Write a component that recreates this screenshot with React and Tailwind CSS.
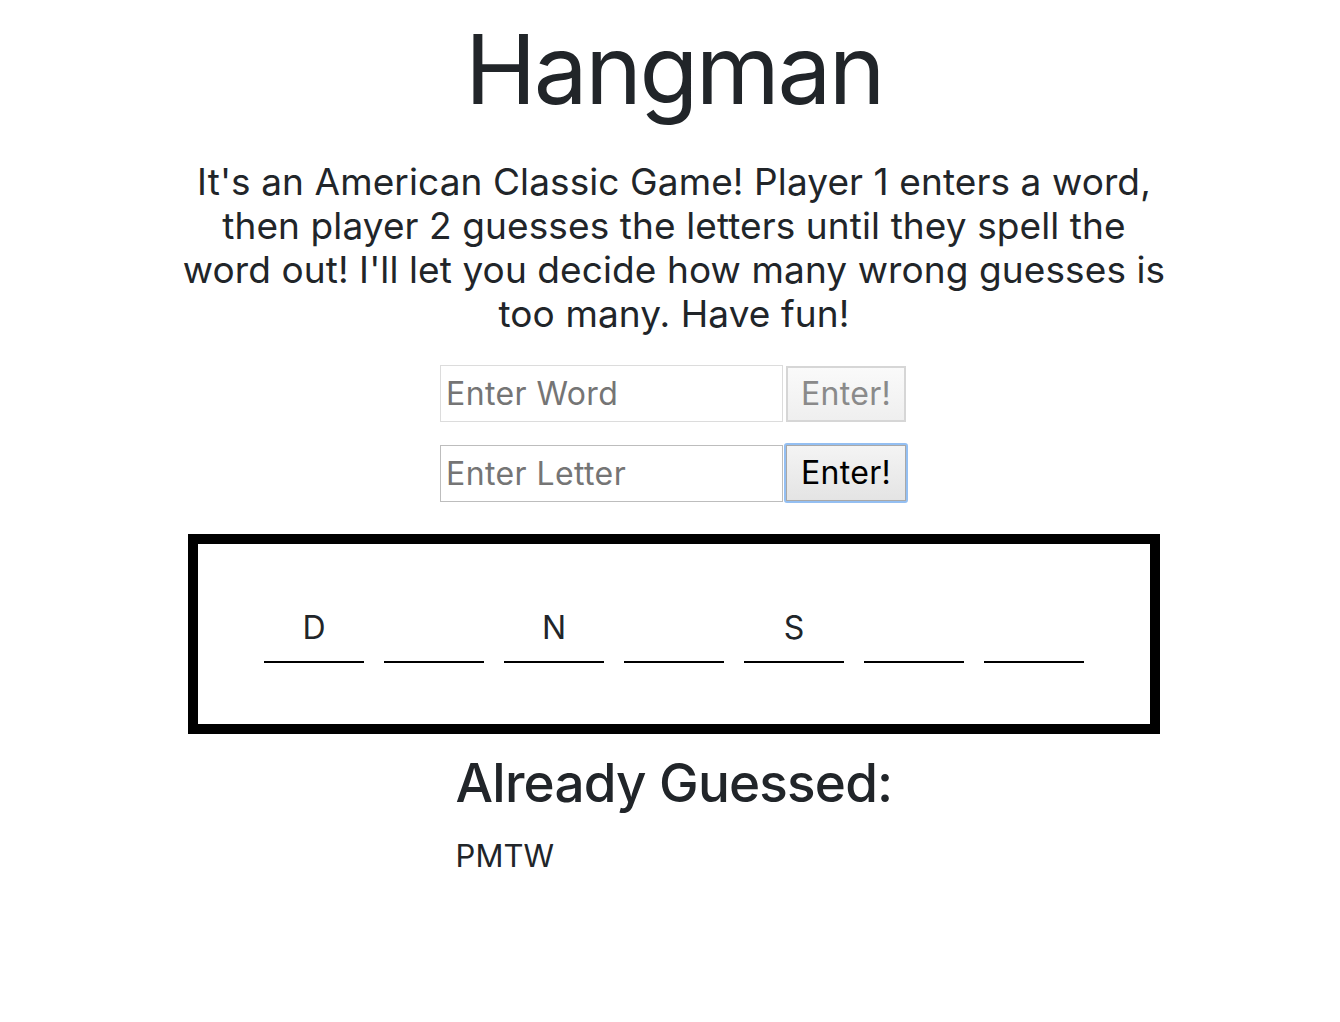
import React from "react";

const font = { fontFamily: "Inter, 'Noto Sans', sans-serif" };

function Blank({ ch }) {
  return (
    <div className="w-[100px] border-b-2 border-black text-center text-[32px] leading-[40px] pb-[13px] text-[#212529] h-[55px]">
      {ch}
    </div>
  );
}

export default function App() {
  const letters = ["D", "", "N", "", "S", "", ""];
  return (
    <div className="min-h-[1022px] bg-white text-[#212529] pl-[8px]" style={font}>
      <div className="flex flex-col items-center">
        <h1 className="mt-[12px] text-[96px] leading-[115px] font-normal tracking-[-2.5px]">Hangman</h1>
        <p className="mt-[33px] w-[992px] text-center text-[37px] leading-[44px] tracking-[0.1px]">
          It's an American Classic Game! Player 1 enters a word, then player 2 guesses the letters until they spell the word out! I'll let you decide how many wrong guesses is too many. Have fun!
        </p>
        <div className="mt-[29px] flex flex-col gap-[21px]">
          <div className="flex items-center">
            <input
              disabled
              placeholder="Enter Word"
              className="w-[343px] h-[57px] border border-[#dcdcdc] bg-white px-[5px] text-[32px] tracking-[0.4px] placeholder:text-[#757575] outline-none"
            />
            <button
              disabled
              className="ml-[3px] w-[120px] h-[56px] border-2 border-[#d6d6d6] bg-gradient-to-b from-[#fafafa] to-[#efefef] text-[32px] tracking-[0.3px] text-[#8a8a8a]"
            >
              Enter!
            </button>
          </div>
          <div className="flex items-center">
            <input
              placeholder="Enter Letter"
              className="w-[343px] h-[57px] border border-[#bdbdbd] bg-white px-[5px] text-[32px] tracking-[0.4px] placeholder:text-[#757575] outline-none"
            />
            <button className="ml-[1px] w-[124px] h-[60px] rounded-[3px] border-2 border-[#94bff2] p-0 bg-[#94bff2]">
              <div className="w-full h-full border border-[#a8a8a8] bg-gradient-to-b from-[#f4f4f4] to-[#e4e4e4] text-[32px] tracking-[0.3px] text-black flex items-center justify-center">
                Enter!
              </div>
            </button>
          </div>
        </div>
        <div className="mt-[31px] w-[972px] h-[200px] border-[10px] border-black flex justify-center gap-[20px] pt-[64px]">
          {letters.map((c, i) => (
            <Blank key={i} ch={c} />
          ))}
        </div>
        <div className="mt-[18px] inline-block text-left">
          <h2 className="text-[53px] leading-[62px] font-medium tracking-[-0.8px]">Already Guessed:</h2>
          <div className="mt-[23px] text-[31px] leading-[38px]">PMTW</div>
        </div>
      </div>
    </div>
  );
}
